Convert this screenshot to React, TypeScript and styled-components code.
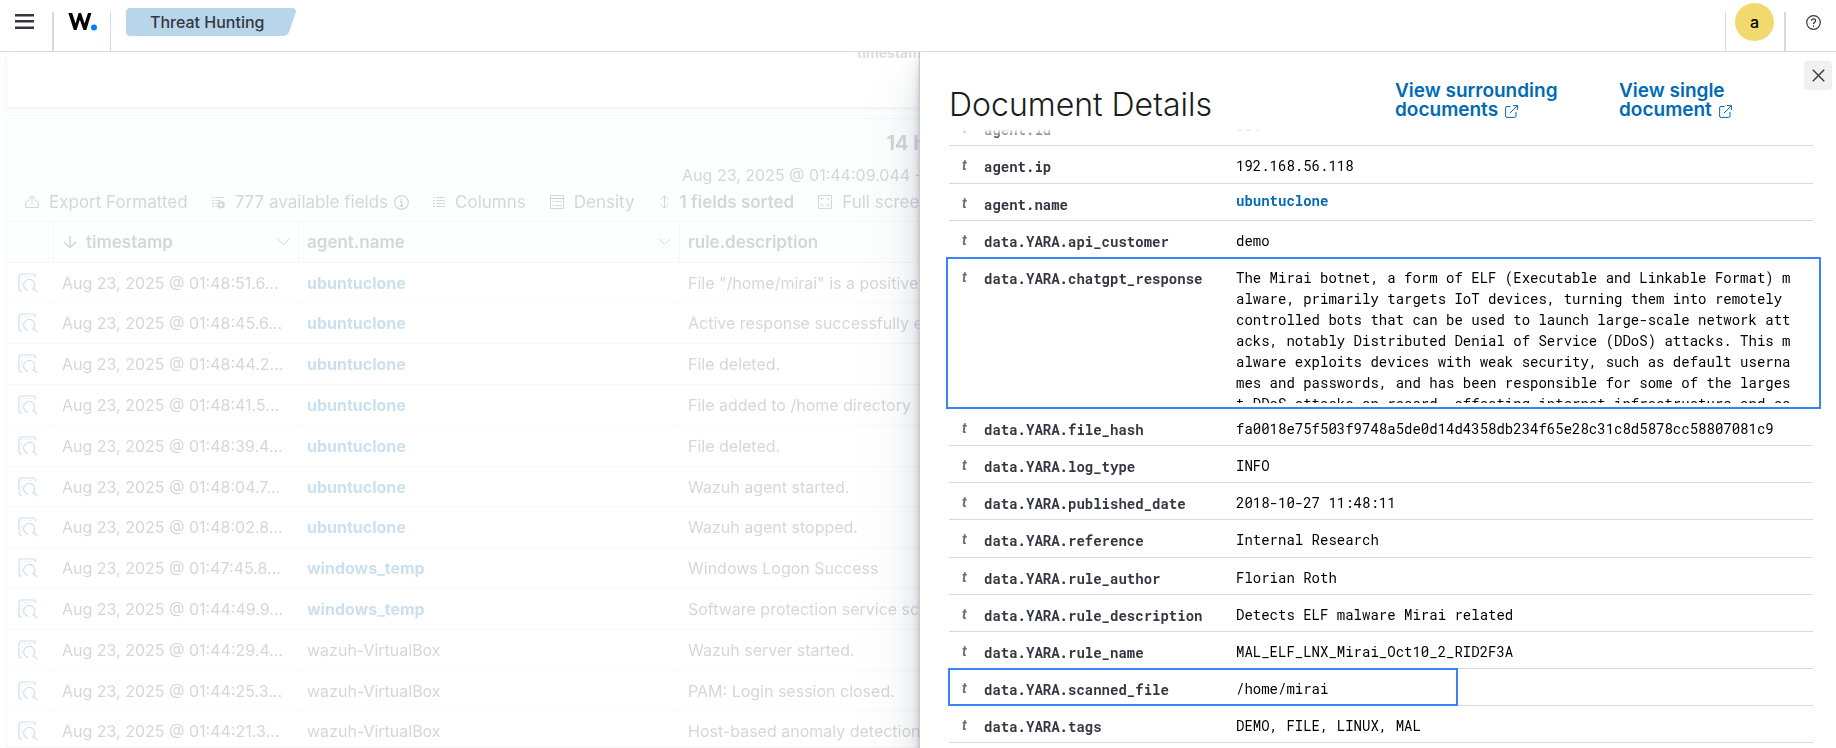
import React from "react";
import styled, { createGlobalStyle } from "styled-components";

const SANS = `Inter, "Liberation Sans", sans-serif`;
const MONO = `"Roboto Mono", "DejaVu Sans Mono", "Liberation Mono", monospace`;
const LINK = "#006bb4";
const LINE = "#d3dae6";
const INK = "#343741";

const GlobalStyle = createGlobalStyle`
  *, *::before, *::after { box-sizing: border-box; }
  body { margin: 0; background: #fff; color: ${INK}; font: 400 16px/24px ${SANS}; }
  button { font: inherit; color: inherit; background: none; border: 0; padding: 0; cursor: pointer; }
  a { color: ${LINK}; text-decoration: none; }
  svg { display: block; flex: none; }
`;

/* ---------- page frame ---------- */

const Page = styled.div`
  display: flex;
  flex-direction: column;
  height: 100vh;
  overflow: hidden;
`;

const Header = styled.header`
  display: flex;
  flex: none;
  height: 52px;
  border-bottom: 1px solid ${LINE};
  background: #fff;
`;

const HeaderItem = styled.div<{ $pad: string }>`
  display: flex;
  align-items: center;
  height: 44px;
  padding: ${(p) => p.$pad};
`;

const Divider = styled.span<{ $thick?: boolean }>`
  align-self: flex-end;
  width: ${(p) => (p.$thick ? 2 : 1)}px;
  height: 39px;
  background: ${LINE};
`;

const Crumb = styled.a`
  display: block;
  height: 28px;
  padding: 0 32px 0 24px;
  border-radius: 4px;
  background: #b8d6ea;
  clip-path: path("M4 0 H167 Q172 0 170 4 L163 24 Q161 28 157 28 H4 Q0 28 0 24 V4 Q0 0 4 0 Z");
  color: ${INK};
  font-weight: 500;
  line-height: 28px;
`;

const Spacer = styled.div`
  flex: 1;
`;

const Avatar = styled.button`
  width: 39px;
  height: 38px;
  border-radius: 50%;
  background: #f1d86f;
  color: #000;
  font-weight: 500;
  line-height: 38px;
`;

const Stage = styled.div`
  position: relative;
  flex: 1;
  min-height: 0;
  overflow: hidden;
`;

/* ---------- dimmed event list ---------- */

const Dimmed = styled.main`
  display: flex;
  flex-direction: column;
  gap: 10px;
  height: 100%;
  padding: 0 6px;
  background: #fafbfd;
  opacity: 0.2;
`;

const ChartPanel = styled.section`
  flex: none;
  height: 56px;
  border: 1px solid ${LINE};
  border-top: 0;
  border-radius: 0 0 4px 4px;
  background: #fff;
  box-shadow: 0 2px 3px rgba(90, 100, 110, 0.25);
  overflow: hidden;
`;

const AxisTitle = styled.div`
  margin-top: -7px;
  color: #535966;
  font-size: 14px;
  font-weight: 700;
  line-height: 16px;
  padding-left: 850px;
  white-space: nowrap;
`;

const GridPanel = styled.section`
  flex: 1;
  border: 1px solid ${LINE};
  background: #f7fbfb;
  overflow: hidden;
`;

const Hits = styled.h2`
  margin: 12px 0 0;
  font-size: 20px;
  font-weight: 700;
  line-height: 24px;
  text-align: center;
`;

const Range = styled.p`
  margin: 8px 0 0;
  line-height: 24px;
  text-align: center;
`;

const Toolbar = styled.div`
  display: flex;
  align-items: center;
  height: 34px;
  padding: 0 18px 4px;
  gap: 24px;
  font-size: 17px;
`;

const Tool = styled.button<{ $bold?: boolean }>`
  display: flex;
  align-items: center;
  gap: 10px;
  height: 24px;
  white-space: nowrap;
  font-weight: ${(p) => (p.$bold ? 600 : 400)};
  line-height: 24px;
`;

const ToolLabel = styled.span`
  display: flex;
  align-items: center;
  gap: 6px;
`;

const Grid = styled.table`
  width: 100%;
  table-layout: fixed;
  border-spacing: 0;
  border-top: 1px solid ${LINE};
`;

const GridHead = styled.th`
  height: 41px;
  padding: 0 8px;
  border-bottom: 1px solid ${LINE};
  border-right: 1px solid ${LINE};
  font-size: 17px;
  font-weight: 600;
  text-align: left;
  white-space: nowrap;
`;

const HeadRow = styled.div`
  display: flex;
  align-items: center;
  gap: 8px;
`;

const HeadLabel = styled.span`
  flex: 1;
`;

const GridRow = styled.tr`
  height: 41px;
  background: #fff;

  &:nth-child(5n + 1) {
    height: 40px;
  }
`;

const GridCell = styled.td`
  padding: 0 8px;
  border-bottom: 1px solid #dfe5ec;
  border-right: 1px solid #eef1f6;
  white-space: nowrap;
  overflow: hidden;
  text-overflow: ellipsis;

  &:first-child {
    padding: 0 11px;
    color: ${LINK};
  }

  button {
    display: block;
  }
`;

const AgentLink = styled.a`
  font-weight: 700;
`;

/* ---------- flyout ---------- */

const Flyout = styled.aside`
  position: absolute;
  top: 0;
  right: 0;
  bottom: 0;
  display: flex;
  flex-direction: column;
  width: calc(50% - 1px);
  border-left: 1px solid #c3c9d6;
  background: #fff;
  box-shadow: 0 40px 64px rgba(65, 78, 101, 0.1), 0 24px 32px rgba(65, 78, 101, 0.1),
    0 16px 16px rgba(65, 78, 101, 0.1), 0 8px 8px rgba(65, 78, 101, 0.1),
    0 4px 4px rgba(65, 78, 101, 0.1), 0 2px 2px rgba(65, 78, 101, 0.1);
`;

const CloseButton = styled.button`
  position: absolute;
  top: 9px;
  right: 4px;
  display: grid;
  place-items: center;
  width: 28px;
  height: 29px;
  border-radius: 4px;
  background: #f0f0f1;
`;

const FlyoutHeader = styled.div`
  display: grid;
  grid-template-columns: 1fr 224px 194px;
  flex: none;
  height: 77px;
  padding: 29px 23px 0 29px;
`;

const Title = styled.h1`
  margin: 4px 0 0;
  color: #1a1c21;
  font-size: 32px;
  font-weight: 300;
  line-height: 40px;
  white-space: nowrap;
`;

const TitleLink = styled.a`
  padding-right: 24px;
  font-size: 19px;
  font-weight: 600;
  line-height: 19px;

  svg {
    display: inline-block;
    margin-left: 2px;
    vertical-align: -2px;
  }
`;

const FlyoutBody = styled.div`
  flex: 1;
  min-height: 0;
  padding: 0 23px 0 29px;
  overflow: hidden;
  mask-image: linear-gradient(to bottom, transparent 0, #000 10px);
`;

const Fields = styled.table`
  width: 100%;
  margin-top: -20px;
  table-layout: fixed;
  border-spacing: 0;
  font: 400 14px/21px ${MONO};
`;

const FieldRow = styled.tr<{ $tall?: boolean }>`
  position: relative;
  height: ${(p) => (p.$tall ? 151 : 37)}px;
  vertical-align: top;

  &:nth-child(7n + 2) {
    height: 38px;
  }
`;

const TypeCell = styled.td`
  padding: 9px 0 0 13px;
  border-bottom: 1px solid ${LINE};
  color: #69707d;
  font: italic 700 13px/21px ${SANS};
`;

const NameCell = styled.th`
  padding: 10px 0 0;
  border-bottom: 1px solid ${LINE};
  font-weight: 700;
  text-align: left;
  white-space: nowrap;
`;

const ValueCell = styled.td`
  padding: 9px 16px 0 0;
  border-bottom: 1px solid ${LINE};
  color: #000;
`;

const Value = styled.div`
  max-height: 136px;
  overflow: hidden;
  word-break: break-all;
`;

const ValueLink = styled.a`
  display: block;
  font-weight: 700;
  line-height: 16px;
`;

const Marker = styled.span<{ $wide?: boolean }>`
  position: absolute;
  top: -1px;
  bottom: 0;
  left: ${(p) => (p.$wide ? -3 : -1)}px;
  width: ${(p) => (p.$wide ? "calc(100% + 11px)" : "59%")};
  border: 2px solid #3884f8;
  pointer-events: none;
`;

/* ---------- icons ---------- */

const stroke = { fill: "none", stroke: "currentColor", strokeWidth: 1 } as const;

const MenuIcon = () => (
  <svg width="19" height="16" viewBox="0 0 19 16" fill={INK}>
    <path d="M0 0h19v2.6H0zM0 6h19v2.6H0zM0 12.4h19V15H0z" />
  </svg>
);

const Logo = () => (
  <svg width="30" height="18" viewBox="0 0 30 18" aria-label="Home">
    <path
      fill="#000"
      d="M.4 0h3.8l3.4 10.6L10.6 0h2.4l3.6 10.6L20 0h3.4L18.3 17h-2.8L11.8 6.8 8.5 17H5.8z"
    />
    <circle cx="26" cy="14.6" r="3" fill="#0a7cff" />
  </svg>
);

const HelpIcon = () => (
  <svg width="15" height="15" viewBox="0 0 15 15" fill="none" stroke={INK}>
    <circle cx="7.5" cy="7.5" r="6.8" strokeWidth="1.2" />
    <path d="M5.4 5.8 C5.4 3.2 9.6 3.2 9.6 5.7 C9.6 7.3 7.5 7.2 7.5 9" strokeWidth="1.3" />
    <circle cx="7.5" cy="11" r="0.5" fill={INK} strokeWidth="0.6" />
  </svg>
);

const CloseIcon = () => (
  <svg width="13" height="13" viewBox="0 0 13 13" fill="none" stroke={INK} strokeWidth="1.4">
    <path d="M.8 .8 L12.2 12.2 M12.2 .8 L.8 12.2" />
  </svg>
);

const PopoutIcon = () => (
  <svg width="13" height="13" viewBox="0 0 13 13" {...stroke}>
    <path d="M5.5 1.5 H2 Q.6 1.5 .6 3 V11 Q.6 12.4 2 12.4 H9.6 Q11 12.4 11 11 V7" />
    <path d="M8 .6 H12.4 V5 M12.4 .6 L5 8" />
  </svg>
);

const ExportIcon = () => (
  <svg width="14" height="14" viewBox="0 0 14 14" {...stroke}>
    <path d="M4 5.5H3Q.5 6 .5 9V12.5H13.5V9Q13.5 6 11 5.5H10M7 9.5V1M3.8 4L7 .8 10.2 4" />
  </svg>
);

const ListIcon = () => (
  <svg width="12" height="12" viewBox="0 0 12 12" {...stroke}>
    <path d="M0 1.5h2M0 4.5h2M0 7.5h2M0 10.5h2M3.5 1.5H12M3.5 4.5H12M3.5 7.5H12M3.5 10.5H12" />
  </svg>
);

const ListAddIcon = () => (
  <svg width="13" height="13" viewBox="0 0 13 13" {...stroke}>
    <path d="M0 1.5h2M0 4.5h2M0 7.5h2M0 10.5h2M3.5 1.5H12M3.5 4.5H8M3.5 7.5H5M3.5 10.5H5" />
    <circle cx="9" cy="8.8" r="3.8" fill="currentColor" stroke="none" />
    <path d="M9 6.8v4M7 8.8h4" stroke="#fff" />
  </svg>
);

const InfoIcon = () => (
  <svg width="15" height="15" viewBox="0 0 15 15" {...stroke}>
    <circle cx="7.5" cy="7.5" r="6.8" strokeWidth="1.3" />
    <path d="M6 6.5h1.7v4.4M5.6 11h4.2M7.3 3.6v1.4" strokeWidth="1.3" />
  </svg>
);

const DensityIcon = () => (
  <svg width="14" height="14" viewBox="0 0 14 14" {...stroke}>
    <path d="M.5 .5h13v13H.5zM.5 3.5h13M2.5 6.5h2M6 6.5h5.5M2.5 10.5h2M6 10.5h5.5" />
  </svg>
);

const SortIcon = () => (
  <svg width="11" height="14" viewBox="0 0 11 14" {...stroke}>
    <path d="M5.5 1v12M1.5 4.5l4-3.7 4 3.7M1.5 9.5l4 3.7 4-3.7" />
  </svg>
);

const FullScreenIcon = () => (
  <svg width="14" height="14" viewBox="0 0 14 14" {...stroke}>
    <path d="M.5 .5h13v13H.5zM3.5 5.5V3.5h2M8.5 3.5h2v2M10.5 8.5v2h-2M5.5 10.5h-2v-2" />
  </svg>
);

const ArrowDownIcon = () => (
  <svg width="16" height="16" viewBox="0 0 16 16" fill="none" stroke="currentColor" strokeWidth="1.4">
    <path d="M8 2v11.5M1.8 7.8L8 13.6l6.2-5.8" />
  </svg>
);

const ChevronIcon = () => (
  <svg width="13" height="8" viewBox="0 0 13 8" {...stroke}>
    <path d="M1 1l5.5 5.5L12 1" />
  </svg>
);

const InspectIcon = () => (
  <svg width="20" height="20" viewBox="0 0 20 20" fill="none" stroke="currentColor" strokeWidth="1.2">
    <path d="M17.4 4V3.4Q17.4 1 15 1H3.4Q1 1 1 3.4V15.5Q1 18 3.8 18.4" />
    <path d="M3 3.5h1.5M6 3.5h1.5M9 3.5h1.5M12 3.5h1.5M3 7h2M3 10h1.5M3 13h1.5" strokeWidth="1" strokeOpacity="0.6" />
    <path d="M10 17.4A5.6 5.6 0 1 1 14.6 16.4M15.4 15.4L19.4 19.4" />
  </svg>
);

/* ---------- data ---------- */

const events: [string, string, string, boolean][] = [
  ["01:48:51.6...", "ubuntuclone", 'File "/home/mirai" is a positive match for YARA rule', true],
  ["01:48:45.6...", "ubuntuclone", "Active response successfully executed", true],
  ["01:48:44.2...", "ubuntuclone", "File deleted.", true],
  ["01:48:41.5...", "ubuntuclone", "File added to /home directory", true],
  ["01:48:39.4...", "ubuntuclone", "File deleted.", true],
  ["01:48:04.7...", "ubuntuclone", "Wazuh agent started.", true],
  ["01:48:02.8...", "ubuntuclone", "Wazuh agent stopped.", true],
  ["01:47:45.8...", "windows_temp", "Windows Logon Success", true],
  ["01:44:49.9...", "windows_temp", "Software protection service scheduled successfully.", true],
  ["01:44:29.4...", "wazuh-VirtualBox", "Wazuh server started.", false],
  ["01:44:25.3...", "wazuh-VirtualBox", "PAM: Login session closed.", false],
  ["01:44:21.3...", "wazuh-VirtualBox", "Host-based anomaly detection event (rootcheck).", false],
];

interface Field {
  name: string;
  value: string;
  link?: boolean;
  mark?: "wide" | "short";
}

const fields: Field[] = [
  { name: "agent.id", value: "001", link: true },
  { name: "agent.ip", value: "192.168.56.118" },
  { name: "agent.name", value: "ubuntuclone", link: true },
  { name: "data.YARA.api_customer", value: "demo" },
  {
    name: "data.YARA.chatgpt_response",
    value:
      "The Mirai botnet, a form of ELF (Executable and Linkable Format) malware, primarily targets IoT devices, turning them into remotely controlled bots that can be used to launch large-scale network attacks, notably Distributed Denial of Service (DDoS) attacks. This malware exploits devices with weak security, such as default usernames and passwords, and has been responsible for some of the largest DDoS attacks on record, affecting internet infrastructure and services.",
    mark: "wide",
  },
  { name: "data.YARA.file_hash", value: "fa0018e75f503f9748a5de0d14d4358db234f65e28c31c8d5878cc58807081c9" },
  { name: "data.YARA.log_type", value: "INFO" },
  { name: "data.YARA.published_date", value: "2018-10-27 11:48:11" },
  { name: "data.YARA.reference", value: "Internal Research" },
  { name: "data.YARA.rule_author", value: "Florian Roth" },
  { name: "data.YARA.rule_description", value: "Detects ELF malware Mirai related" },
  { name: "data.YARA.rule_name", value: "MAL_ELF_LNX_Mirai_Oct10_2_RID2F3A" },
  { name: "data.YARA.scanned_file", value: "/home/mirai", mark: "short" },
  { name: "data.YARA.tags", value: "DEMO, FILE, LINUX, MAL" },
];

/* ---------- view ---------- */

const TopBar = () => (
  <Header>
    <HeaderItem $pad="0 18px 0 15px">
      <button aria-label="Toggle menu"><MenuIcon /></button>
    </HeaderItem>
    <Divider $thick />
    <HeaderItem $pad="0 12px 0 14px">
      <a href="#home"><Logo /></a>
    </HeaderItem>
    <Divider />
    <HeaderItem $pad="0 0 0 15px">
      <Crumb href="#threat-hunting">Threat Hunting</Crumb>
    </HeaderItem>
    <Spacer />
    <Divider />
    <HeaderItem $pad="0 10px 0 9px">
      <Avatar aria-label="Account menu">a</Avatar>
    </HeaderItem>
    <Divider $thick />
    <HeaderItem $pad="0 15px 0 20px">
      <button aria-label="Help menu"><HelpIcon /></button>
    </HeaderItem>
  </Header>
);

const EventList = () => (
  <Dimmed>
    <ChartPanel>
      <AxisTitle>timestamp per 30 seconds</AxisTitle>
    </ChartPanel>
    <GridPanel>
      <Hits>14 hits</Hits>
      <Range>Aug 23, 2025 @ 01:44:09.044 - Aug 23, 2025 @ 01:54:09.044</Range>
      <Toolbar>
        <Tool><ExportIcon />Export Formatted</Tool>
        <Tool><ListAddIcon /><ToolLabel>777 available fields<InfoIcon /></ToolLabel></Tool>
        <Tool><ListIcon />Columns</Tool>
        <Tool><DensityIcon />Density</Tool>
        <Tool $bold><SortIcon />1 fields sorted</Tool>
        <Tool><FullScreenIcon />Full screen</Tool>
      </Toolbar>
      <Grid>
        <colgroup>
          <col style={{ width: 47 }} />
          <col style={{ width: 245 }} />
          <col style={{ width: 381 }} />
          <col />
        </colgroup>
        <thead>
          <tr>
            <GridHead aria-label="Inspect" />
            <GridHead><HeadRow><ArrowDownIcon /><HeadLabel>timestamp</HeadLabel><ChevronIcon /></HeadRow></GridHead>
            <GridHead><HeadRow><HeadLabel>agent.name</HeadLabel><ChevronIcon /></HeadRow></GridHead>
            <GridHead>rule.description</GridHead>
          </tr>
        </thead>
        <tbody>
          {events.map(([time, agent, text, linked]) => (
            <GridRow key={time}>
              <GridCell><button aria-label="Inspect document"><InspectIcon /></button></GridCell>
              <GridCell>Aug 23, 2025 @ {time}</GridCell>
              <GridCell>{linked ? <AgentLink href="#agent">{agent}</AgentLink> : agent}</GridCell>
              <GridCell>{text}</GridCell>
            </GridRow>
          ))}
        </tbody>
      </Grid>
    </GridPanel>
  </Dimmed>
);

const DocumentFlyout = () => (
  <Flyout>
    <FlyoutHeader>
      <Title>Document Details</Title>
      <TitleLink href="#surrounding">View surrounding documents <PopoutIcon /></TitleLink>
      <TitleLink href="#single">View single document <PopoutIcon /></TitleLink>
    </FlyoutHeader>
    <CloseButton aria-label="Close"><CloseIcon /></CloseButton>
    <FlyoutBody>
      <Fields>
        <colgroup>
          <col style={{ width: 35 }} />
          <col style={{ width: 252 }} />
          <col />
        </colgroup>
        <tbody>
          {fields.map((f) => (
            <FieldRow key={f.name} $tall={f.mark === "wide"}>
              <TypeCell>t{f.mark && <Marker $wide={f.mark === "wide"} />}</TypeCell>
              <NameCell scope="row">{f.name}</NameCell>
              <ValueCell>
                {f.link ? <ValueLink href="#agent">{f.value}</ValueLink> : <Value>{f.value}</Value>}
              </ValueCell>
            </FieldRow>
          ))}
        </tbody>
      </Fields>
    </FlyoutBody>
  </Flyout>
);

export default function App() {
  return (
    <>
      <GlobalStyle />
      <Page>
        <TopBar />
        <Stage>
          <EventList />
          <DocumentFlyout />
        </Stage>
      </Page>
    </>
  );
}
